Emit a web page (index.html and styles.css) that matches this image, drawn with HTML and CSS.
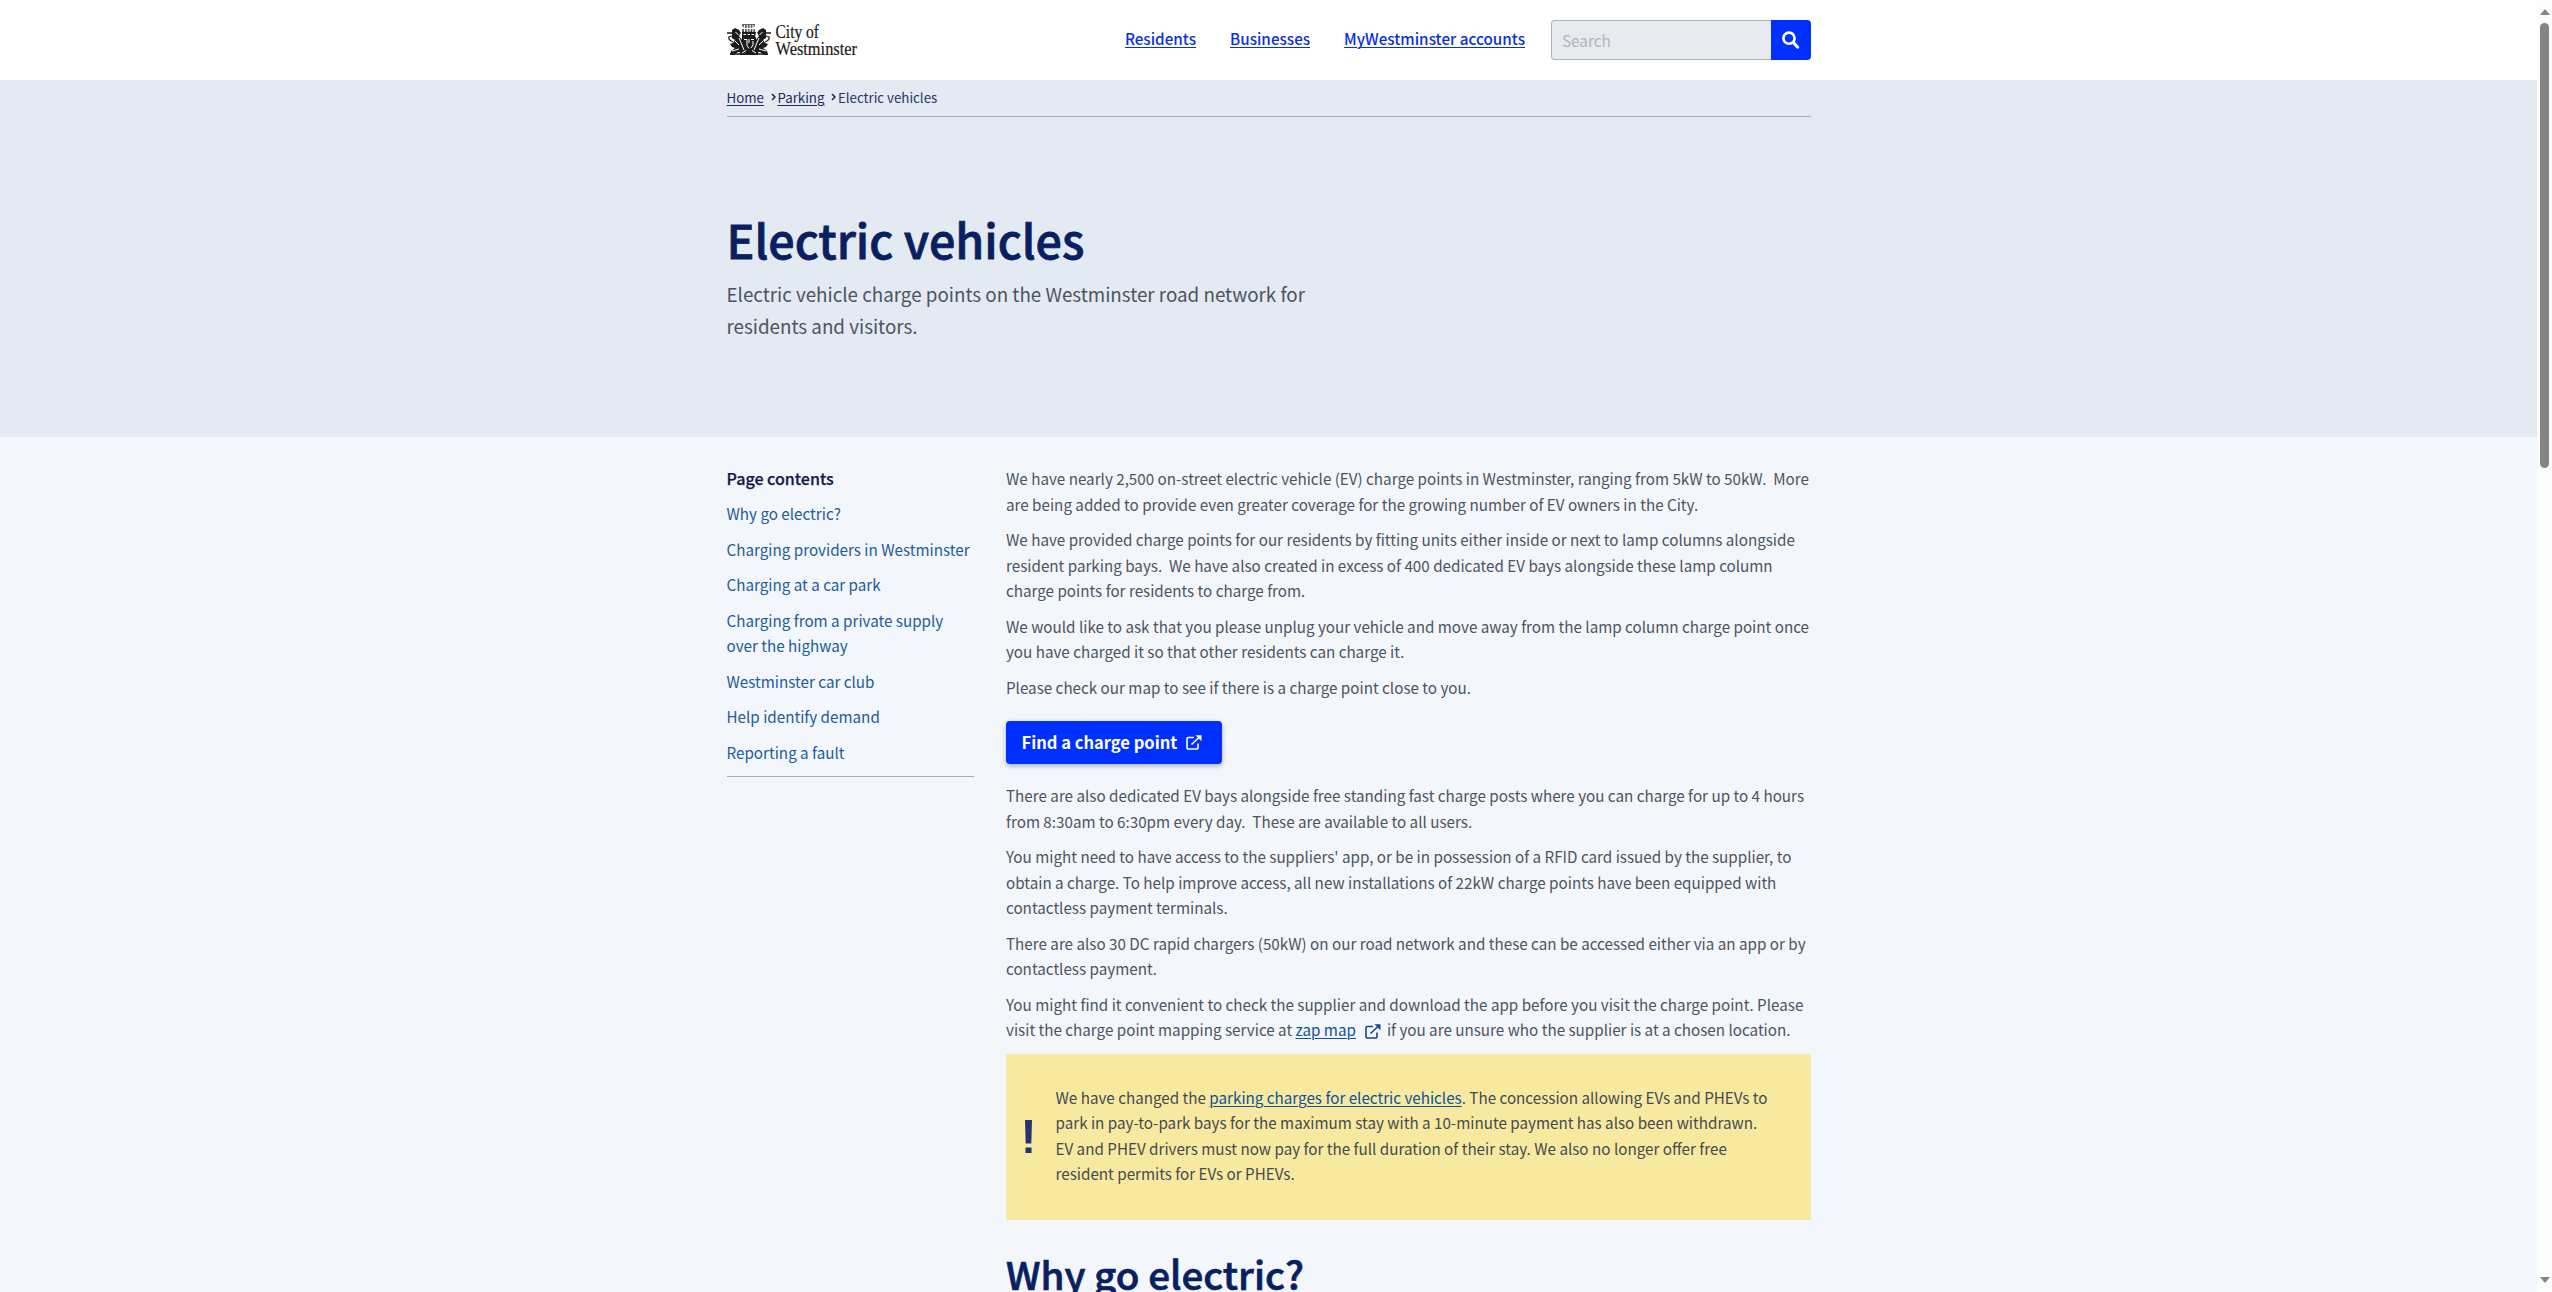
FILE: index.html
```html
<!DOCTYPE html>
<html lang="en">
<head>
<meta charset="utf-8">
<title>Electric vehicles | Westminster City Council</title>
<link rel="stylesheet" href="styles.css">
</head>
<body>
<div class="page">
  <header class="header">
    <div class="container header-row">
      <svg class="logo" width="134" height="44" viewBox="0 -2 134 44" role="img" aria-label="City of Westminster">
        <g fill="#1c1c1c">
          <path d="M15 4h13v2.500h-1.500v2.500H28v5H15V9h1.500V6.500H15z" fill="#666"/>
          <path d="M5 10l3-2 4 2 2 3-2 3 4 5 3 8-2 4-6-1-4 3H3l1-4 4-3-3-1-2-3 3-1 2-3-3-2z"/>
          <path d="M39 10l-3-2-4 2-2 3 2 3-4 5-3 8 2 4 6-1 4 3h4l-1-4-4-3 3-1 2-3-3-1-2-3 3-2z"/>
          <path d="M13 30q9-2 18 0v5H13z"/>
          <path d="M15 12l3-1 3 1 3-1 5 1-1 5H15z"/>
          <path d="M15 17h14v6q-1 6-7 9-6-3-7-9z"/>
        </g>
        <g fill="none" stroke="#1c1c1c" stroke-width="1.300">
          <path d="M6 22q-5-2-4-5l3-1M38 22q5-2 4-5l-3-1M0 13l6 0M44 13l-6 0M3 34h38"/>
        </g>
        <g fill="none" stroke="#fff" stroke-width="1">
          <path d="M17.500 5v7M20.300 5v7M23.100 5v7M25.900 5v7M15 8.500h13M14 13v3M30 13v3M16.500 14.500h2.500M20.500 14.500h2.500M24.500 14.500h2.500M17 19.500h3v6l2 3M27 19.500h-3M26 21v4l-2 3M22 19v4M8.500 12l3 3M35.500 12l-3 3M8 21l4 4M36 21l-4 4M12 18l3 7 2 5M32 18l-3 7-2 5M15 33l4-2.500M29 33l-4-2.500M5 31l7-2M39 31l-7-2"/>
        </g>
        <g class="logo-text">
          <text x="48.500" y="17.500" textLength="43.500" lengthAdjust="spacingAndGlyphs">City of</text>
          <text x="48.500" y="35.300" textLength="81.500" lengthAdjust="spacingAndGlyphs">Westminster</text>
        </g>
      </svg>
      <nav class="nav">
        <a href="#">Residents</a>
        <a href="#">Businesses</a>
        <a href="#">MyWestminster accounts</a>
      </nav>
      <form class="search">
        <input class="search-input" type="text" placeholder="Search" aria-label="Search">
        <button class="search-button" type="button" aria-label="Search">
          <svg width="18" height="18" viewBox="0 0 18 18" fill="none" stroke="#fff"><circle cx="7" cy="7.200" r="5.600" stroke-width="2.600"/><path d="M11.200 11.400L15.500 16" stroke-width="3.200" stroke-linecap="round"/></svg>
        </button>
      </form>
    </div>
  </header>

  <section class="hero">
    <div class="container">
      <nav class="breadcrumb">
        <a href="#">Home</a>
        <svg class="chevron" width="5" height="8" viewBox="0 0 5 8"><path d="M1 1l3 3-3 3"/></svg>
        <a href="#">Parking</a>
        <svg class="chevron" width="5" height="8" viewBox="0 0 5 8"><path d="M1 1l3 3-3 3"/></svg>
        <span>Electric vehicles</span>
      </nav>
      <h1>Electric vehicles</h1>
      <p class="lead">Electric vehicle charge points on the Westminster road network for<br>residents and visitors.</p>
    </div>
  </section>

  <main class="container columns">
    <aside class="contents">
      <h2>Page contents</h2>
      <ul>
        <li><a href="#">Why go electric?</a></li>
        <li><a href="#">Charging providers in Westminster</a></li>
        <li><a href="#">Charging at a car park</a></li>
        <li><a href="#">Charging from a private supply<br>over the highway</a></li>
        <li><a href="#">Westminster car club</a></li>
        <li><a href="#">Help identify demand</a></li>
        <li><a href="#">Reporting a fault</a></li>
      </ul>
    </aside>
    <article class="article">
      <p>We have nearly 2,500 on-street electric vehicle (EV) charge points in Westminster, ranging from 5kW to 50kW.&nbsp; More<br>are being added to provide even greater coverage for the growing number of EV owners in the City.</p>
      <p>We have provided charge points for our residents by fitting units either inside or next to lamp columns alongside<br>resident parking bays.&nbsp; We have also created in excess of 400 dedicated EV bays alongside these lamp column<br>charge points for residents to charge from.</p>
      <p>We would like to ask that you please unplug your vehicle and move away from the lamp column charge point once<br>you have charged it so that other residents can charge it.</p>
      <p>Please check our map to see if there is a charge point close to you.</p>
      <a class="button" href="#">Find a charge point
        <svg class="external" width="16" height="15" viewBox="0 0 16 15"><path d="M8 2.500H2.500a1.500 1.500 0 0 0-1.500 1.500v8.500a1.500 1.500 0 0 0 1.500 1.500h8a1.500 1.500 0 0 0 1.500-1.500V8.500M5.500 9.500l7.500-7" /><path class="tip" d="M9.500 .3h6V6.300z"/></svg>
      </a>
      <p>There are also dedicated EV bays alongside free standing fast charge posts where you can charge for up to 4 hours<br>from 8:30am to 6:30pm every day.&nbsp; These are available to all users.</p>
      <p>You might need to have access to the suppliers' app, or be in possession of a RFID card issued by the supplier, to<br>obtain a charge. To help improve access, all new installations of 22kW charge points have been equipped with<br>contactless payment terminals.</p>
      <p>There are also 30 DC rapid chargers (50kW) on our road network and these can be accessed either via an app or by<br>contactless payment.</p>
      <p>You might find it convenient to check the supplier and download the app before you visit the charge point. Please<br>visit the charge point mapping service at <a href="#">zap map</a><svg class="external inline" width="16" height="15" viewBox="0 0 16 15"><path d="M8 2.500H2.500a1.500 1.500 0 0 0-1.500 1.500v8.500a1.500 1.500 0 0 0 1.500 1.500h8a1.500 1.500 0 0 0 1.500-1.500V8.500M5.500 9.500l7.500-7"/><path class="tip" d="M9.500 .3h6V6.300z"/></svg>if you are unsure who the supplier is at a chosen location.</p>
      <div class="notice">
        <svg class="mark" width="7" height="33" viewBox="0 0 7 33"><path d="M0 0h7l-.7 23.500H.7zM.5 27.500h6V33h-6z"/></svg>
        <p>We have changed the <a href="#">parking charges for electric vehicles</a>. The concession allowing EVs and PHEVs to<br>park in pay-to-park bays for the maximum stay with a 10-minute payment has also been withdrawn.<br>EV and PHEV drivers must now pay for the full duration of their stay. We also no longer offer free<br>resident permits for EVs or PHEVs.</p>
      </div>
      <h2>Why go electric?</h2>
    </article>
  </main>
</div>
<div class="scrollbar">
  <svg width="10" height="6" viewBox="0 0 10 6"><path d="M0 6l5-6 5 6z"/></svg>
  <div class="thumb"></div>
  <svg class="down" width="10" height="6" viewBox="0 0 10 6"><path d="M0 0l5 6 5-6z"/></svg>
</div>
</body>
</html>
```
FILE: styles.css
```css
* { box-sizing: border-box; margin: 0; padding: 0; }

body {
  display: flex;
  height: 1292px;
  overflow: hidden;
  background: #f3f6fb;
  color: #4c5462;
  font-family: "Noto Sans CJK SC", "Noto Sans", sans-serif;
  font-size: 15.21px;
  line-height: 25.5px;
}

.page { flex: 1; height: 1292px; overflow: hidden; }
.container { width: 1084.500px; margin-left: 726.500px; }

.header { height: 80px; background: #fff; }
.header-row { display: flex; align-items: center; height: 80px; }
.logo { overflow: visible; }
.logo-text { font-family: "Liberation Serif", serif; font-size: 18.500px; fill: #1a1a1a; stroke: #1a1a1a; stroke-width: 0.200px; }
.nav { display: flex; gap: 34px; margin: 0 0 2px auto; font-size: 15.250px; font-weight: 500; }
.nav a { color: #0a2ee2; text-decoration-thickness: 1px; text-underline-offset: 2px; }

.search { display: flex; width: 260px; height: 40px; margin-left: 26px; }
.search-input {
  width: 220px;
  padding-left: 10px;
  border: 1px solid #a9b4c2;
  border-right: 0;
  border-radius: 4px 0 0 4px;
  background: #e7ebef;
  font: 15.300px "Noto Sans CJK SC", sans-serif;
}
.search-input::placeholder { color: #adb5c0; opacity: 1; }
.search-button {
  display: flex;
  align-items: center;
  justify-content: center;
  width: 40px;
  border: 0;
  border-radius: 0 4px 4px 0;
  background: #0030ff;
}

.hero { height: 357px; background: #e4eaf1; }
.breadcrumb {
  display: flex;
  align-items: center;
  height: 37px;
  border-bottom: 1px solid #a4aebf;
  color: #27346b;
  font-size: 13.300px;
  line-height: 36px;
}
.breadcrumb a { color: #1d2a63; text-decoration-thickness: 1px; text-underline-offset: 2px; }
.chevron { margin: 0 1.700px 3px 6.800px; fill: none; stroke: #1d2442; stroke-width: 1.500; }

h1 {
  margin-top: 92px;
  color: #0a1f62;
  font-size: 46.600px;
  font-weight: 500;
  line-height: 60px;
  -webkit-text-stroke: 0.800px #0a1f62;
}
.lead { margin-top: 9px; font-size: 18.800px; line-height: 32.200px; }

.columns { display: flex; gap: 32px; padding-top: 29px; }
.contents { width: 247.500px; height: 311px; border-bottom: 1px solid #a4aebf; }
.contents h2 { color: #14194a; font-size: 16.050px; font-weight: 500; line-height: 25.500px; -webkit-text-stroke: 0.250px #14194a; }
.contents ul { display: flex; flex-direction: column; gap: 10.100px; margin-top: 9.500px; list-style: none; }
.contents a { color: #225c9a; text-decoration: none; }

.article { width: 805px; white-space: nowrap; }
.article p + p { margin-top: 10px; }
.article p a { color: #0f5299; text-decoration-thickness: 1px; text-underline-offset: 2px; }

.button {
  display: flex;
  align-items: center;
  gap: 9px;
  width: 216px;
  height: 43px;
  margin: 21px 0 19px;
  padding-left: 15.500px;
  border-radius: 4px;
  background: #0030ff;
  box-shadow: 0 2px 5px rgba(0, 0, 0, 0.3);
  color: #fff;
  font-size: 16.550px;
  font-weight: 700;
  text-decoration: none;
}
.external { fill: none; stroke: #fff; stroke-width: 1.600; }
.external .tip { fill: #fff; stroke: none; }
.external.inline { margin: 0 6px 0 9px; stroke: #0f4596; vertical-align: -3px; }
.external.inline .tip { fill: #0f4596; }

.notice {
  display: flex;
  align-items: center;
  gap: 23.500px;
  height: 166px;
  margin-top: 11px;
  padding-left: 19px;
  background: #f8e9a1;
  color: #454a50;
}
.notice .mark { fill: #27346b; }
.notice p { margin-bottom: 1.500px; }

.article h2 { margin-top: 29px; color: #0a1f62; font-size: 38.600px; font-weight: 500; line-height: 48px; -webkit-text-stroke: 0.700px #0a1f62; }

.scrollbar {
  display: flex;
  flex-direction: column;
  align-items: center;
  width: 15px;
  height: 1292px;
  padding: 9px 0;
  background: #fcfcfc;
  fill: #858585;
}
.thumb { width: 9px; height: 445px; margin-top: 8px; border-radius: 5px; background: #858585; }
.down { margin-top: auto; }
```
